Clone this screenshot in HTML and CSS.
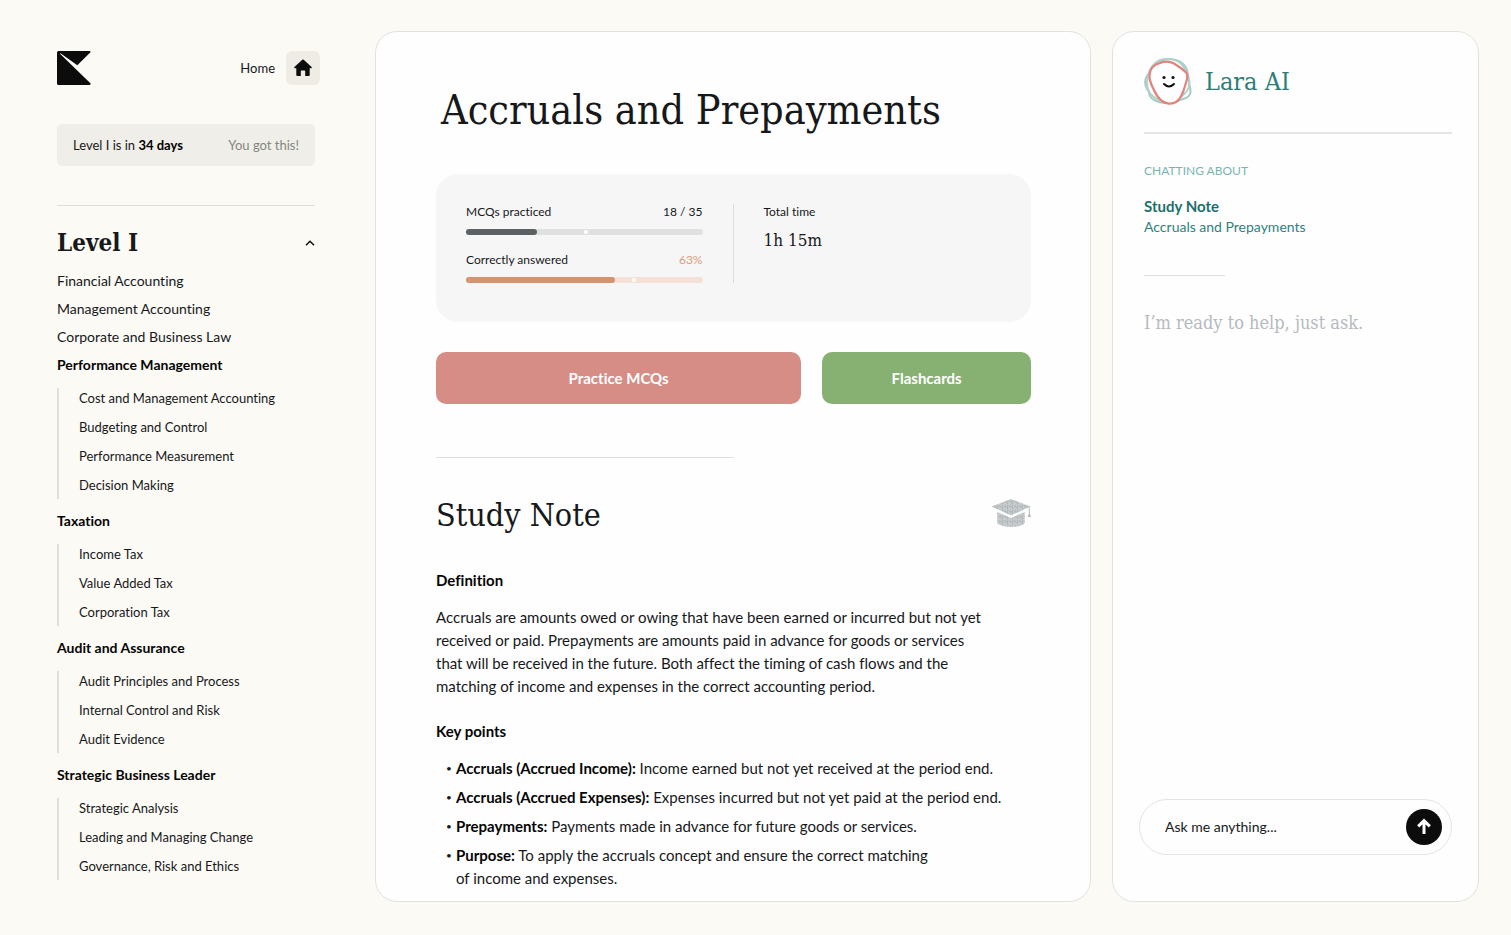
FILE: index.html
```html
<!DOCTYPE html>
<html lang="en">
<head>
    <meta charset="UTF-8">
    <meta name="viewport" content="width=device-width, initial-scale=1.0">
    <title>Accruals and Prepayments</title>
    <link rel="stylesheet" href="styles.css">
</head>
<body>
    <div class="layout">
        <!-- Sidebar -->
        <aside class="sidebar">
            <header class="sidebar-header">
                <svg class="logo" viewBox="0 0 34 34" role="img" aria-label="Logo">
                    <path d="M0 1.500Q0 0 1.500 0H32.500Q34.300 .3 33.200 1.600L20.300 14.300 3.500 2.200 3 2.800 33.400 32.200Q34.300 33.800 32.500 34H1.500Q0 34 0 32.500Z" fill="#0c0c0c"/>
                </svg>
                <a class="home-link" href="#">
                    <span>Home</span>
                    <span class="home-icon">
                        <svg viewBox="0 0 20 20" width="20" height="20" aria-hidden="true">
                            <path d="M9.300 1.700Q10 1.100 10.700 1.700L18.600 8.900Q19.200 10 18.100 10.200H16.700V17Q16.700 18 15.700 18H12.200V13.200Q12.200 12.600 11.600 12.600H8.400Q7.800 12.600 7.800 13.200V18H4.300Q3.300 18 3.300 17V10.200H1.900Q.8 10 1.400 8.900Z" fill="#0c0c0c"/>
                        </svg>
                    </span>
                </a>
            </header>

            <div class="countdown">
                <span>Level I is in <b>34 days</b></span>
                <span class="cheer">You got this!</span>
            </div>

            <hr class="rule">

            <div class="level">
                <h2 class="level-title">Level I</h2>
                <button class="collapse-btn" type="button" aria-label="Collapse Level I">
                    <svg viewBox="0 0 10 6" width="10" height="6" aria-hidden="true">
                        <path d="M1 5.200 5 1.200 9 5.200" fill="none" stroke="#111" stroke-width="1.500"/>
                    </svg>
                </button>
            </div>

            <nav>
                <ul class="topics">
                    <li><a href="#">Financial Accounting</a></li>
                    <li><a href="#">Management Accounting</a></li>
                    <li><a href="#">Corporate and Business Law</a></li>
                    <li>
                        <a class="topic-open" href="#">Performance Management</a>
                        <ul class="subtopics">
                            <li><a href="#">Cost and Management Accounting</a></li>
                            <li><a href="#">Budgeting and Control</a></li>
                            <li><a href="#">Performance Measurement</a></li>
                            <li><a href="#">Decision Making</a></li>
                        </ul>
                    </li>
                    <li>
                        <a class="topic-open" href="#">Taxation</a>
                        <ul class="subtopics">
                            <li><a href="#">Income Tax</a></li>
                            <li><a href="#">Value Added Tax</a></li>
                            <li><a href="#">Corporation Tax</a></li>
                        </ul>
                    </li>
                    <li>
                        <a class="topic-open" href="#">Audit and Assurance</a>
                        <ul class="subtopics">
                            <li><a href="#">Audit Principles and Process</a></li>
                            <li><a href="#">Internal Control and Risk</a></li>
                            <li><a href="#">Audit Evidence</a></li>
                        </ul>
                    </li>
                    <li>
                        <a class="topic-open" href="#">Strategic Business Leader</a>
                        <ul class="subtopics">
                            <li><a href="#">Strategic Analysis</a></li>
                            <li><a href="#">Leading and Managing Change</a></li>
                            <li><a href="#">Governance, Risk and Ethics</a></li>
                        </ul>
                    </li>
                </ul>
            </nav>
        </aside>

        <!-- Study note -->
        <main class="card content">
            <h1 class="page-title">Accruals and Prepayments</h1>

            <section class="stats">
                <div class="stats-progress">
                    <div class="stat-row">
                        <span>MCQs practiced</span>
                        <span>18 / 35</span>
                    </div>
                    <div class="bar bar-dark">
                        <div class="bar-fill" style="width: 30%"></div>
                        <div class="bar-mark" style="left: 50%"></div>
                    </div>
                    <div class="stat-row">
                        <span>Correctly answered</span>
                        <span class="accent">63%</span>
                    </div>
                    <div class="bar bar-orange">
                        <div class="bar-fill" style="width: 63%"></div>
                        <div class="bar-mark" style="left: 70%"></div>
                    </div>
                </div>
                <div class="stats-time">
                    <div class="stat-row">Total time</div>
                    <div class="time-value">1h 15m</div>
                </div>
            </section>

            <div class="actions">
                <button class="action-btn practice" type="button">Practice MCQs</button>
                <button class="action-btn flashcards" type="button">Flashcards</button>
            </div>

            <hr class="rule rule-half">

            <div class="note-header">
                <h2 class="note-title">Study Note</h2>
                <svg class="cap-icon" viewBox="0 0 40 32" width="40" height="32" aria-hidden="true">
                    <defs>
                        <pattern id="speckle" width="5" height="5" patternUnits="userSpaceOnUse">
                            <rect width="5" height="5" fill="#bdc2c5"/>
                            <path d="M0 1H1M3 0V1M2 3H3M4 4V5" stroke="#d9dcde"/>
                            <path d="M1 2H2M4 2V3M1 4H2" stroke="#a9afb2"/>
                        </pattern>
                    </defs>
                    <path d="M20 0 39.500 7.500 20 16.500 .5 7.500Z" fill="url(#speckle)"/>
                    <path d="M6.300 13 20 19 33.700 13V24C31 29 9 29 6.300 24Z" fill="url(#speckle)"/>
                    <path d="M38.300 7.500V14" stroke="#b4b9bc" fill="none"/>
                    <path d="M38.300 13 40 18H36.800Z" fill="#b4b9bc"/>
                </svg>
            </div>

            <h3 class="note-heading">Definition</h3>
            <p class="note-text">
                Accruals are amounts owed or owing that have been earned or incurred but not yet<br>
                received or paid. Prepayments are amounts paid in advance for goods or services<br>
                that will be received in the future. Both affect the timing of cash flows and the<br>
                matching of income and expenses in the correct accounting period.
            </p>

            <h3 class="note-heading">Key points</h3>
            <ul class="key-points">
                <li><b>Accruals (Accrued Income):</b> Income earned but not yet received at the period end.</li>
                <li><b>Accruals (Accrued Expenses):</b> Expenses incurred but not yet paid at the period end.</li>
                <li><b>Prepayments:</b> Payments made in advance for future goods or services.</li>
                <li><b>Purpose:</b> To apply the accruals concept and ensure the correct matching<br> of income and expenses.</li>
            </ul>
        </main>

        <!-- AI assistant -->
        <aside class="card assistant">
            <header class="assistant-header">
                <svg class="avatar" viewBox="0 0 48 50" width="48" height="50" aria-hidden="true">
                    <g fill="none" stroke="#a3cbc7" stroke-width="2">
                        <path d="M16 4C24 0 36 2 41 9C45 14 43 20 45 26C47 33 48 38 42 41C35 43 31 46 23 46C13 46 5 42 5 35C2 31 0 26 2 21C5 16 8 8 16 4Z"/>
                        <path d="M18 2.500C28 1 37 4 41 12C46 19 47 28 43 34C37 42 25 47 15 43C8 40 3 34 3 26C3 17 8 5 18 2.500Z" stroke="#b3d0cd"/>
                        <path d="M41 34 20 45.500 34 44Z" fill="#a3cbc7" stroke="none"/>
                        <path d="M7 12 14 8 7 22Z" fill="#a3cbc7" stroke="none"/>
                    </g>
                    <path d="M16 6C20 4.500 26 4.500 30 6.500C34 9 39 12 42.500 16C45 20 42 24 41 29C39 36 37 42 32 45C28 47.500 22 47 18 44C13 40 11 36 9 31C7 27 5 23 5.500 18C6 12 10 7.500 16 6Z" fill="#fff" stroke="#e38278" stroke-width="2.200"/>
                    <circle cx="20" cy="20.500" r="1.600" fill="#111"/>
                    <circle cx="29" cy="20.500" r="1.600" fill="#111"/>
                    <path d="M20 27Q25 32 30 27" fill="none" stroke="#111" stroke-width="2" stroke-linecap="round"/>
                </svg>
                <h2 class="assistant-name">Lara AI</h2>
            </header>

            <hr class="rule rule-thick">

            <div class="context">
                <div class="context-label">CHATTING ABOUT</div>
                <div class="context-type">Study Note</div>
                <a class="context-link" href="#">Accruals and Prepayments</a>
            </div>

            <hr class="rule rule-short">

            <p class="greeting">I’m ready to help, just ask.</p>

            <form class="ask">
                <input class="ask-input" type="text" aria-label="Ask Lara AI" placeholder="Ask me anything...">
                <button class="send-btn" type="button" aria-label="Send">
                    <svg viewBox="0 0 16 18" width="16" height="18" aria-hidden="true">
                        <path d="M8 16V3M2.200 8.400 8 2.600 13.800 8.400" fill="none" stroke="#fff" stroke-width="3"/>
                    </svg>
                </button>
            </form>
        </aside>
    </div>
</body>
</html>
```
FILE: styles.css
```css
* {
    box-sizing: border-box;
}
body {
    margin: 0;
    background-color: #fbfaf5;
    color: #17181a;
    font-family: Lato, "Liberation Sans", sans-serif;
    font-size: 14px;
    font-variant-ligatures: none;
    line-height: 20px;
}
h1, h2, h3, p, ul {
    margin: 0;
    padding: 0;
    font-weight: normal;
}
ul {
    list-style: none;
}
a {
    color: inherit;
    text-decoration: none;
}
button, input {
    font: inherit;
}
svg {
    display: block;
}

.layout {
    display: grid;
    grid-template-columns: 297px minmax(0, 1fr) 367px;
    gap: 21px;
    min-height: 100vh;
    padding: 31px 32px 33px 57px;
}
.card {
    background-color: #fefefe;
    border: 1px solid #e2e2e0;
    border-radius: 22px;
}
.rule {
    width: 100%;
    height: 1px;
    margin: 0;
    border: none;
    background-color: #dededb;
}

/* Sidebar */
.sidebar {
    padding: 20px 39px 0 0;
}
.sidebar-header {
    display: flex;
    justify-content: space-between;
    align-items: center;
    margin-right: -5px;
}
.logo {
    width: 34px;
    height: 34px;
}
.home-link {
    display: flex;
    align-items: center;
    gap: 11px;
    font-size: 13px;
}
.home-icon {
    display: flex;
    align-items: center;
    justify-content: center;
    width: 34px;
    height: 34px;
    border-radius: 6px;
    background-color: #eeece5;
}
.countdown {
    display: flex;
    justify-content: space-between;
    align-items: center;
    margin: 39px 0;
    padding: 11px 16px;
    border-radius: 5px;
    background-color: #f0eee8;
    font-size: 13px;
}
.countdown b {
    color: #000;
}
.cheer {
    color: #85867f;
}
.level {
    display: flex;
    justify-content: space-between;
    align-items: center;
    margin: 21px 0 12px;
}
.level-title {
    font-family: "DejaVu Serif Condensed", "DejaVu Serif", serif;
    font-size: 24px;
    font-weight: bold;
    line-height: 32px;
}
.collapse-btn {
    padding: 5px 0;
    border: none;
    background: none;
    cursor: pointer;
}
.topics {
    display: flex;
    flex-direction: column;
    gap: 8px;
}
.topics a {
    display: block;
}
.topic-open {
    font-weight: bold;
    color: #050505;
}
.subtopics {
    display: flex;
    flex-direction: column;
    gap: 9px;
    margin: 13px 0 4px;
    padding: 0 0 4px 20px;
    border-left: 2px solid #dfdfdb;
    font-size: 13px;
}

/* Study note */
.content {
    padding: 54px 59px 11px 60px;
}
.page-title {
    padding-left: 5px;
    font-family: "DejaVu Serif Condensed", "DejaVu Serif", serif;
    font-size: 41px;
    line-height: 48px;
}
.stats {
    display: grid;
    grid-template-columns: 1fr 1fr;
    margin: 40px 0 30px;
    padding: 30px 30px 39px;
    border-radius: 22px;
    background-color: #f6f6f6;
}
.stats-progress {
    padding-right: 30px;
    border-right: 1px solid #dcdcdc;
}
.stats-time {
    padding-left: 30px;
}
.stat-row {
    display: flex;
    justify-content: space-between;
    font-size: 12px;
    line-height: 16px;
}
.accent {
    color: #dc9c7c;
}
.bar {
    position: relative;
    height: 6px;
    margin-top: 9px;
    border-radius: 3px;
}
.bar + .stat-row {
    margin-top: 17px;
}
.bar-fill {
    height: 100%;
    border-radius: 3px;
}
.bar-mark {
    position: absolute;
    top: 1px;
    width: 4px;
    height: 4px;
    border-radius: 50%;
    background-color: #fff;
}
.bar-dark {
    background-color: #dfe0e0;
}
.bar-dark .bar-fill {
    background-color: #5d6164;
}
.bar-orange {
    background-color: #f5e0d6;
}
.bar-orange .bar-fill {
    background-color: #d39470;
}
.time-value {
    margin-top: 8px;
    font-family: "DejaVu Serif Condensed", "DejaVu Serif", serif;
    font-size: 17px;
    line-height: 24px;
}
.actions {
    display: grid;
    grid-template-columns: 7fr 4fr;
    gap: 21px;
}
.action-btn {
    height: 52px;
    border: none;
    border-radius: 10px;
    color: #fff;
    font-size: 15px;
    font-weight: bold;
    cursor: pointer;
}
.practice {
    background-color: #d58d86;
}
.flashcards {
    background-color: #87b073;
}
.rule-half {
    width: 50%;
    margin-top: 53px;
}
.note-header {
    display: flex;
    justify-content: space-between;
    align-items: center;
    margin: 35px 0 32px;
}
.note-title {
    font-family: "DejaVu Serif Condensed", "DejaVu Serif", serif;
    font-size: 32px;
    line-height: 44px;
}
.note-heading {
    margin-bottom: 14px;
    color: #050505;
    font-size: 15px;
    font-weight: bold;
    line-height: 23px;
}
.note-text {
    margin-bottom: 22px;
    font-size: 15px;
    line-height: 23px;
}
.key-points {
    display: flex;
    flex-direction: column;
    gap: 6px;
    padding-left: 10px;
    font-size: 15px;
    line-height: 23px;
}
.key-points li {
    display: flow-root;
    padding-left: 10px;
}
.key-points li::before {
    content: "•";
    float: left;
    margin-left: -10px;
    font-size: 10px;
}
.key-points b {
    color: #050505;
}

/* AI assistant */
.assistant {
    display: flex;
    flex-direction: column;
    padding: 25px 26px 46px 31px;
}
.assistant-header {
    display: flex;
    align-items: center;
    gap: 13px;
    margin-bottom: 25px;
}
.assistant-name {
    color: #2f7d79;
    font-family: "DejaVu Serif Condensed", "DejaVu Serif", serif;
    font-size: 25px;
    line-height: 32px;
}
.rule-thick {
    height: 2px;
    background-color: #e4e4e4;
}
.context {
    margin: 27px 0 38px;
    color: #2f827c;
}
.context-label {
    margin-bottom: 15px;
    color: #79b5ae;
    font-size: 12px;
}
.context-type {
    color: #1d7069;
    font-size: 15px;
    font-weight: bold;
    line-height: 21px;
}
.rule-short {
    width: 81px;
}
.greeting {
    margin-top: 35px;
    color: #b5babe;
    font-family: "DejaVu Serif Condensed", "DejaVu Serif", serif;
    font-size: 18px;
    line-height: 24px;
}
.ask {
    display: flex;
    align-items: center;
    margin-top: auto;
    margin-left: -5px;
    padding: 9px 9px 9px 25px;
    border: 1px solid #e4e4e4;
    border-radius: 28px;
}
.ask-input {
    flex: 1;
    min-width: 0;
    padding: 0;
    border: none;
    outline: none;
    background: none;
}
.ask-input::placeholder {
    color: #17181a;
    opacity: 1;
}
.send-btn {
    display: flex;
    align-items: center;
    justify-content: center;
    width: 36px;
    height: 36px;
    padding: 0;
    border: none;
    border-radius: 50%;
    background-color: #0c0c0c;
    cursor: pointer;
}
```
